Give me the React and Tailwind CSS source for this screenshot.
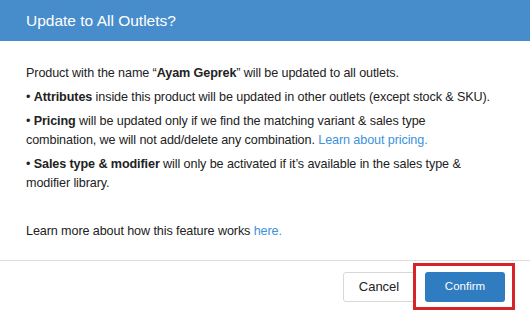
const App = () => {
  return (
    <div
      className="flex h-[318px] w-[530px] flex-col overflow-hidden bg-white text-[#222]"
      style={{ fontFamily: '"Liberation Sans", Arial, sans-serif' }}
    >
      {/* Header */}
      <div className="flex h-[41px] shrink-0 items-center bg-[#478dcb] px-[26px]">
        <h1 className="text-[15.5px] font-normal text-white">Update to All Outlets?</h1>
      </div>

      {/* Body */}
      <div className="flex flex-col px-[26px] pt-[23px] text-[12.6px] leading-[19px] tracking-[-0.1px]">
        <p className="mb-[5px]">
          Product with the name “<b>Ayam Geprek</b>” will be updated to all outlets.
        </p>
        <p className="mb-[5px] whitespace-nowrap">
          • <b>Attributes</b> inside this product will be updated in other outlets (except stock &amp; SKU).
        </p>
        <p className="mb-[5px] w-[430px]">
          • <b>Pricing</b> will be updated only if we find the matching variant &amp; sales type
          combination, we will not add/delete any combination.{' '}
          <a className="text-[#3d92dc]">Learn about pricing.</a>
        </p>
        <p className="w-[450px]">
          • <b>Sales type &amp; modifier</b> will only be activated if it’s available in the sales type &amp;
          modifier library.
        </p>
        <p className="mt-[29px]">
          Learn more about how this feature works <a className="text-[#3d92dc]">here.</a>
        </p>
      </div>

      {/* Footer */}
      <div className="mt-[19px] flex justify-end gap-[10px] border-t border-[#dedede] pr-[25px] pt-[11px]">
        <button className="h-[30px] w-[72px] rounded-[3px] border border-[#d8d8d8] bg-white text-[13px] text-[#222]">
          Cancel
        </button>
        <div className="relative">
          <button className="h-[30px] w-[80px] rounded-[3px] bg-[#2f7cc0] text-[11.5px] text-white">
            Confirm
          </button>
          <div className="pointer-events-none absolute -bottom-[8px] -left-[12px] -right-[10px] -top-[9px] border-[3px] border-[#d9232a]" />
        </div>
      </div>
    </div>
  );
};

export default App;
